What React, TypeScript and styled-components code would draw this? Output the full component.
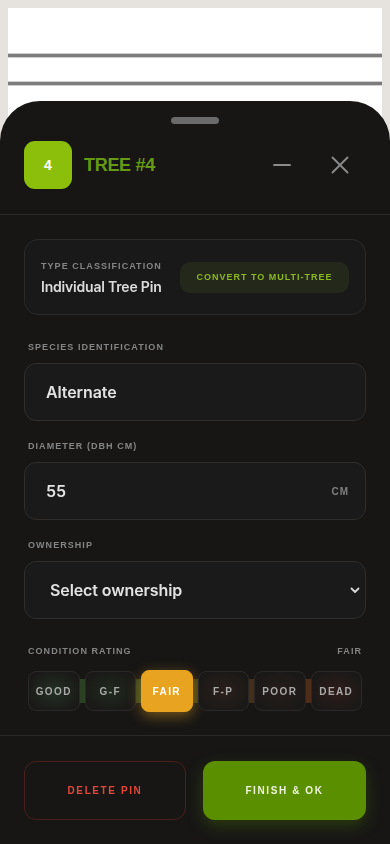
import React from "react";
import styled, { createGlobalStyle } from "styled-components";

const Global = createGlobalStyle`
  html, body { margin: 0; padding: 0; }
  body {
    margin: 8px;
    background: #e6e3df;
    font-family: "Inter", "Liberation Sans", sans-serif;
    overflow: hidden;
  }
  * { box-sizing: border-box; }
`;

const Backdrop = styled.div`
  background: #ffffff;
  height: 828px;
  padding-top: 46px;
  display: flex;
  flex-direction: column;
  gap: 25px;
`;

const Rule = styled.div`
  height: 3px;
  background: #7c7c7c;
  box-shadow: 0 0 0 1px #cfcfcf;
`;

const Sheet = styled.div`
  position: fixed;
  left: 0;
  right: 0;
  bottom: 0;
  height: 743px;
  background: #171615;
  border-radius: 40px 40px 0 0;
  display: flex;
  flex-direction: column;
  & > * { flex-shrink: 0; }
`;

const Handle = styled.div`
  width: 48px;
  height: 7px;
  border-radius: 4px;
  background: #6a6a6a;
  margin: 16px auto 0;
`;

const Header = styled.div`
  display: flex;
  align-items: center;
  padding: 17px 30px 25px 24px;
  border-bottom: 1px solid #2a2928;
`;

const Badge = styled.div`
  width: 48px;
  height: 48px;
  border-radius: 11px;
  background: #8cbf0b;
  color: #ffffff;
  display: flex;
  align-items: center;
  justify-content: center;
  font-family: "Liberation Sans", sans-serif;
  font-weight: 700;
  font-size: 14px;
`;

const Title = styled.div`
  margin-left: 12px;
  flex: 1;
  color: #669a14;
  font-family: "Liberation Sans", sans-serif;
  font-weight: 700;
  font-size: 18px;
  letter-spacing: -0.3px;
`;

const IconButton = styled.button<{ $ml: number }>`
  background: none;
  border: none;
  padding: 0;
  width: 40px;
  height: 40px;
  display: flex;
  align-items: center;
  justify-content: center;
  color: #8a8a8a;
  margin-left: ${(p) => p.$ml}px;
`;

const Body = styled.div`
  padding: 24px 24px 23px;
  display: flex;
  flex-direction: column;
  border-bottom: 1px solid #2a2928;
`;

const TypeCard = styled.div`
  height: 76px;
  border: 1px solid #2b2a29;
  background: #1a1919;
  border-radius: 14px;
  padding: 0 16px;
  display: flex;
  align-items: center;
  justify-content: space-between;
`;

const TypeInfo = styled.div`
  display: flex;
  flex-direction: column;
  gap: 6px;
`;

const Label = styled.div`
  font-family: "Liberation Sans", sans-serif;
  font-weight: 700;
  font-size: 9px;
  line-height: 12px;
  letter-spacing: 1.05px;
  color: #858585;
  text-transform: uppercase;
`;

const TypeValue = styled.div`
  font-family: "Inter", sans-serif;
  font-weight: 600;
  font-size: 14px;
  letter-spacing: -0.2px;
  color: #dcdcdc;
`;

const ConvertButton = styled.button`
  height: 31px;
  width: 169px;
  border: none;
  border-radius: 10px;
  background: #23281a;
  color: #8ab81e;
  font-family: "Liberation Sans", sans-serif;
  font-weight: 700;
  font-size: 9px;
  letter-spacing: 1px;
  padding: 0;
`;

const FieldLabelRow = styled.div<{ $top: number }>`
  display: flex;
  justify-content: space-between;
  padding: 0 4px;
  margin-top: ${(p) => p.$top}px;
  margin-bottom: 10px;
`;

const InputBox = styled.div<{ $pl: number; $pr: number }>`
  height: 58px;
  border: 1px solid #2f2e2d;
  background: #1b1a1a;
  border-radius: 12px;
  display: flex;
  align-items: center;
  justify-content: space-between;
  padding: 0 ${(p) => p.$pr}px 0 ${(p) => p.$pl}px;
`;

const InputText = styled.div`
  font-family: "Inter", sans-serif;
  font-weight: 600;
  font-size: 16px;
  letter-spacing: -0.1px;
  color: #e2e2e2;
`;

const Unit = styled.div`
  font-family: "Liberation Sans", sans-serif;
  font-weight: 700;
  font-size: 10px;
  letter-spacing: 1px;
  color: #7f7f7f;
`;

const Chevron = styled.div`
  color: #d8d8d8;
  display: flex;
  align-items: center;
`;

const RatingWrap = styled.div`
  position: relative;
  margin: 3px 4px 0;
  height: 42px;
  display: flex;
  align-items: center;
`;

const Track = styled.div`
  position: absolute;
  left: 10px;
  right: 10px;
  top: 9px;
  height: 24px;
  border-radius: 12px;
  background: linear-gradient(
    90deg,
    #2c4424 0%,
    #36502a 25%,
    #4e5418 42%,
    #4a3518 62%,
    #5a3418 78%,
    #66301c 100%
  );
  opacity: 0.8;
`;

const RatingRow = styled.div`
  position: relative;
  display: grid;
  grid-template-columns: repeat(6, 1fr);
  gap: 5px;
  width: 100%;
  align-items: center;
`;

const RatingButton = styled.button<{ $active?: boolean; $tint: string }>`
  height: ${(p) => (p.$active ? 42 : 40)}px;
  border-radius: 8px;
  border: 1px solid ${(p) => (p.$active ? "#e8a321" : "#2a2928")};
  background: ${(p) =>
    p.$active
      ? "#e8a321"
      : `radial-gradient(ellipse at center, ${p.$tint} 0%, #1a1918 80%)`};
  color: ${(p) => (p.$active ? "#ffffff" : "#a9a9a9")};
  box-shadow: ${(p) =>
    p.$active ? "0 4px 14px rgba(232,163,33,0.45)" : "none"};
  font-family: "Liberation Sans", sans-serif;
  font-weight: 700;
  font-size: 10px;
  letter-spacing: 1.4px;
  padding: 0;
`;

const Footer = styled.div`
  padding: 25px 24px;
  display: grid;
  grid-template-columns: 162px 163px;
  justify-content: space-between;
`;

const DeleteButton = styled.button`
  height: 59px;
  border-radius: 12px;
  border: 1.5px solid #4a1e1d;
  background: transparent;
  color: #e0483a;
  font-family: "Liberation Sans", sans-serif;
  font-weight: 700;
  font-size: 10px;
  letter-spacing: 1.6px;
`;

const FinishButton = styled.button`
  height: 59px;
  border-radius: 12px;
  border: none;
  background: #5a8f00;
  color: #eef3dc;
  box-shadow: 0 6px 16px rgba(90, 143, 0, 0.3);
  font-family: "Liberation Sans", sans-serif;
  font-weight: 700;
  font-size: 10px;
  letter-spacing: 1.6px;
`;

const ratings = [
  { key: "GOOD", tint: "#233022" },
  { key: "G-F", tint: "#1f2a1d" },
  { key: "FAIR", tint: "#e8a321", active: true },
  { key: "F-P", tint: "#2a1f1a" },
  { key: "POOR", tint: "#261c19" },
  { key: "DEAD", tint: "#2e1c19" },
];

export default function App() {
  return (
    <>
      <Global />
      <Backdrop>
        <Rule />
        <Rule />
      </Backdrop>
      <Sheet>
        <Handle />
        <Header>
          <Badge>4</Badge>
          <Title>TREE #4</Title>
          <IconButton $ml={0} aria-label="Minimize">
            <svg width="18" height="18" viewBox="0 0 18 18">
              <line x1="1" y1="9" x2="17" y2="9" stroke="currentColor" strokeWidth="2" strokeLinecap="round" />
            </svg>
          </IconButton>
          <IconButton $ml={18} aria-label="Close">
            <svg width="18" height="18" viewBox="0 0 18 18">
              <path d="M1.5 1.5 L16.5 16.5 M16.5 1.5 L1.5 16.5" stroke="currentColor" strokeWidth="1.9" strokeLinecap="round" />
            </svg>
          </IconButton>
        </Header>
        <Body>
          <TypeCard>
            <TypeInfo>
              <Label>Type Classification</Label>
              <TypeValue>Individual Tree Pin</TypeValue>
            </TypeInfo>
            <ConvertButton>CONVERT TO MULTI-TREE</ConvertButton>
          </TypeCard>

          <FieldLabelRow $top={26}>
            <Label>Species Identification</Label>
          </FieldLabelRow>
          <InputBox $pl={21} $pr={16}>
            <InputText>Alternate</InputText>
          </InputBox>

          <FieldLabelRow $top={19}>
            <Label>Diameter (DBH CM)</Label>
          </FieldLabelRow>
          <InputBox $pl={21} $pr={16}>
            <InputText>55</InputText>
            <Unit>CM</Unit>
          </InputBox>

          <FieldLabelRow $top={19}>
            <Label>Ownership</Label>
          </FieldLabelRow>
          <InputBox $pl={25} $pr={4}>
            <InputText>Select ownership</InputText>
            <Chevron>
              <svg width="12" height="12" viewBox="0 0 12 12">
                <path d="M2.5 4.5 L6 8 L9.5 4.5" fill="none" stroke="currentColor" strokeWidth="1.8" strokeLinecap="round" strokeLinejoin="round" />
              </svg>
            </Chevron>
          </InputBox>

          <FieldLabelRow $top={26}>
            <Label>Condition Rating</Label>
            <Label>Fair</Label>
          </FieldLabelRow>
          <RatingWrap>
            <Track />
            <RatingRow>
              {ratings.map((r) => (
                <RatingButton key={r.key} $active={r.active} $tint={r.tint}>
                  {r.key}
                </RatingButton>
              ))}
            </RatingRow>
          </RatingWrap>
        </Body>
        <Footer>
          <DeleteButton>DELETE PIN</DeleteButton>
          <FinishButton>FINISH &amp; OK</FinishButton>
        </Footer>
      </Sheet>
    </>
  );
}
